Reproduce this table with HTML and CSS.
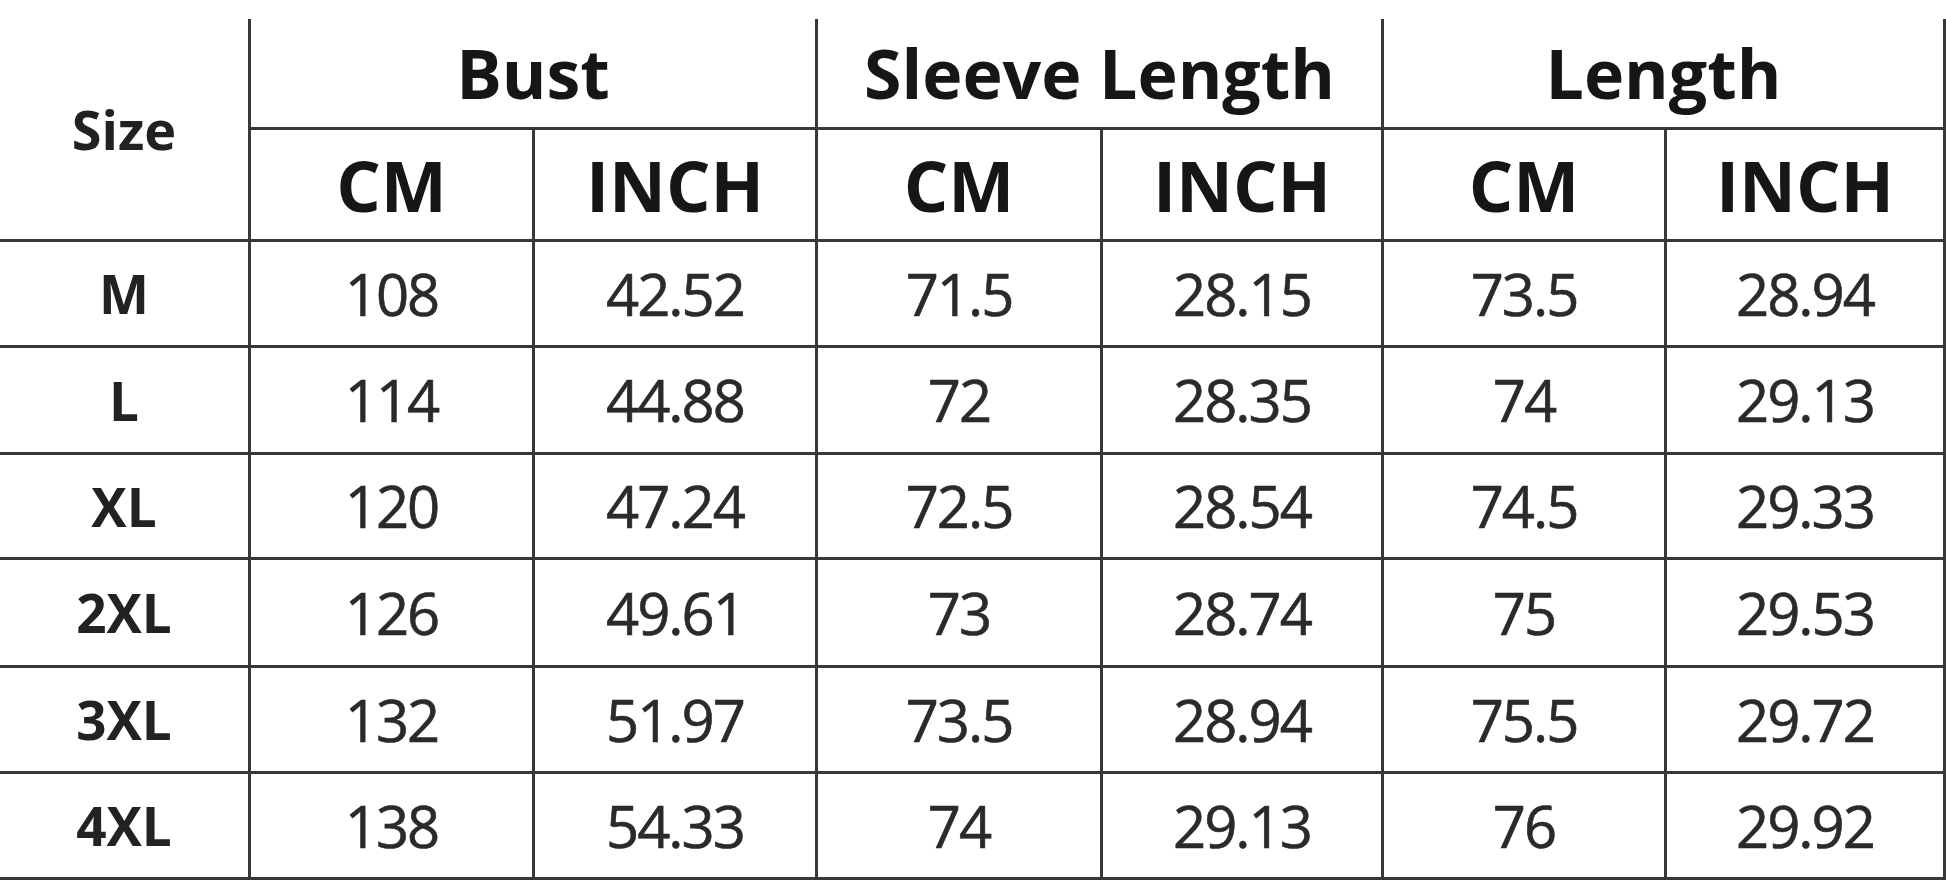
FILE: index.html
```html
<!DOCTYPE html>
<html lang="en">
<head>
<meta charset="utf-8">
<title>Size Chart</title>
<link rel="stylesheet" href="styles.css">
</head>
<body>
<div class="page">
  <div class="chart">
    <div class="cell size-head">Size</div>
    <div class="cell group">Bust</div>
    <div class="cell group">Sleeve Length</div>
    <div class="cell group">Length</div>
    <div class="cell unit">CM</div>
    <div class="cell unit">INCH</div>
    <div class="cell unit">CM</div>
    <div class="cell unit">INCH</div>
    <div class="cell unit">CM</div>
    <div class="cell unit">INCH</div>

    <div class="cell label">M</div>
    <div class="cell num">108</div><div class="cell num">42.52</div>
    <div class="cell num">71.5</div><div class="cell num">28.15</div>
    <div class="cell num">73.5</div><div class="cell num">28.94</div>

    <div class="cell label">L</div>
    <div class="cell num">114</div><div class="cell num">44.88</div>
    <div class="cell num">72</div><div class="cell num">28.35</div>
    <div class="cell num">74</div><div class="cell num">29.13</div>

    <div class="cell label">XL</div>
    <div class="cell num">120</div><div class="cell num">47.24</div>
    <div class="cell num">72.5</div><div class="cell num">28.54</div>
    <div class="cell num">74.5</div><div class="cell num">29.33</div>

    <div class="cell label">2XL</div>
    <div class="cell num">126</div><div class="cell num">49.61</div>
    <div class="cell num">73</div><div class="cell num">28.74</div>
    <div class="cell num">75</div><div class="cell num">29.53</div>

    <div class="cell label">3XL</div>
    <div class="cell num">132</div><div class="cell num">51.97</div>
    <div class="cell num">73.5</div><div class="cell num">28.94</div>
    <div class="cell num">75.5</div><div class="cell num">29.72</div>

    <div class="cell label">4XL</div>
    <div class="cell num">138</div><div class="cell num">54.33</div>
    <div class="cell num">74</div><div class="cell num">29.13</div>
    <div class="cell num">76</div><div class="cell num">29.92</div>
  </div>
</div>
</body>
</html>
```

FILE: styles.css
```css
html, body {
  margin: 0;
  padding: 0;
  background: #ffffff;
}
body {
  width: 1946px;
  height: 884px;
  overflow: hidden;
  font-family: "Open Sans", "Liberation Sans", sans-serif;
}
.page {
  padding-top: 19px;
}
.chart {
  display: grid;
  grid-template-columns: 248px 281px 280px 282px 278px 280px 276px;
  grid-template-rows: 108px 109px 103px 104px 102px 105px 103px 103px;
  gap: 3px;
  padding: 0 3px 3px 0;
  background: #383838;
  width: 1946px;
  box-sizing: border-box;
}
.cell {
  background: #ffffff;
  display: flex;
  align-items: center;
  justify-content: center;
  color: #161616;
  line-height: 1;
}
.size-head {
  grid-row: 1 / span 2;
  font-weight: 700;
  font-size: 54px;
  letter-spacing: 0;
  color: #222222;
}
.group {
  grid-column: span 2;
  font-weight: 700;
  font-size: 68px;
  letter-spacing: 0;
}
.unit {
  font-weight: 700;
  font-size: 70px;
  letter-spacing: 0;
}
.label {
  font-weight: 700;
  font-size: 53px;
  letter-spacing: 0;
  color: #222222;
}
.num {
  font-weight: 400;
  font-size: 58px;
  color: #2a2a2a;
  letter-spacing: -2px;
  -webkit-text-stroke: 0.6px #2a2a2a;
}
```
